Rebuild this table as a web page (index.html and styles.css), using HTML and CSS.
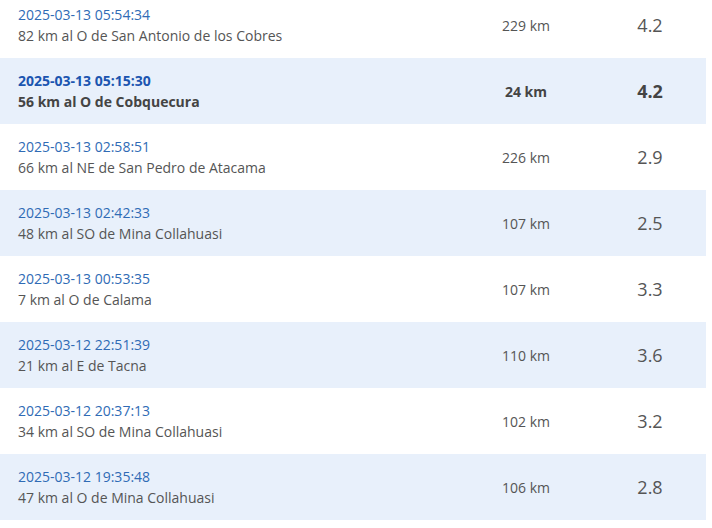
FILE: index.html
```html
<!DOCTYPE html>
<html lang="es">
<head>
<meta charset="utf-8">
<link rel="stylesheet" href="styles.css">
</head>
<body>
<div class="table">
  <div class="row">
    <div class="place"><div class="date">2025-03-13 05:54:34</div><div class="loc">82 km al O de San Antonio de los Cobres</div></div>
    <div class="depth">229 km</div><div class="mag">4.2</div>
  </div>
  <div class="row alt strong">
    <div class="place"><div class="date">2025-03-13 05:15:30</div><div class="loc">56 km al O de Cobquecura</div></div>
    <div class="depth">24 km</div><div class="mag">4.2</div>
  </div>
  <div class="row">
    <div class="place"><div class="date">2025-03-13 02:58:51</div><div class="loc">66 km al NE de San Pedro de Atacama</div></div>
    <div class="depth">226 km</div><div class="mag">2.9</div>
  </div>
  <div class="row alt">
    <div class="place"><div class="date">2025-03-13 02:42:33</div><div class="loc">48 km al SO de Mina Collahuasi</div></div>
    <div class="depth">107 km</div><div class="mag">2.5</div>
  </div>
  <div class="row">
    <div class="place"><div class="date">2025-03-13 00:53:35</div><div class="loc">7 km al O de Calama</div></div>
    <div class="depth">107 km</div><div class="mag">3.3</div>
  </div>
  <div class="row alt">
    <div class="place"><div class="date">2025-03-12 22:51:39</div><div class="loc">21 km al E de Tacna</div></div>
    <div class="depth">110 km</div><div class="mag">3.6</div>
  </div>
  <div class="row">
    <div class="place"><div class="date">2025-03-12 20:37:13</div><div class="loc">34 km al SO de Mina Collahuasi</div></div>
    <div class="depth">102 km</div><div class="mag">3.2</div>
  </div>
  <div class="row alt">
    <div class="place"><div class="date">2025-03-12 19:35:48</div><div class="loc">47 km al O de Mina Collahuasi</div></div>
    <div class="depth">106 km</div><div class="mag">2.8</div>
  </div>
</div>
</body>
</html>
```
FILE: styles.css
```css
html, body {
  margin: 0;
  padding: 0;
  background: #ffffff;
  overflow: hidden;
}
body {
  font-family: "Open Sans", "Liberation Sans", sans-serif;
  font-size: 14px;
  line-height: 21px;
  color: #555555;
}
.table {
  width: 706px;
  margin-top: -8px;
}
.row {
  display: grid;
  grid-template-columns: 460px 132px 114px;
  align-items: center;
  height: 66px;
  box-sizing: border-box;
}
.row.alt {
  background: #e8f0fb;
}
.place {
  padding-left: 18px;
}
.date {
  color: #2f6bb5;
}
.loc {
  color: #555555;
}
.depth {
  text-align: center;
  color: #555555;
}
.mag {
  text-align: center;
  font-size: 18px;
  color: #555555;
  padding-left: 2px;
}
.strong .date {
  color: #1b55b0;
  font-weight: 700;
}
.strong .loc,
.strong .depth,
.strong .mag {
  font-weight: 700;
  color: #444444;
}
```
